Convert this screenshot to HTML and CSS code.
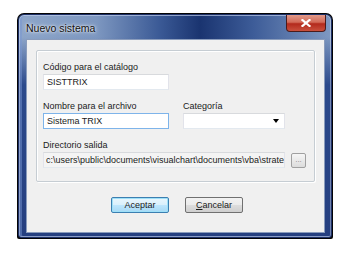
FILE: index.html
```html
<!DOCTYPE html>
<html lang="es">
<head>
  <meta charset="UTF-8" />
  <title>Nuevo sistema</title>
  <link rel="stylesheet" href="styles.css">
</head>
<body>

  <div class="window">
    <div class="glass">
      <div class="titlebar">
        <span class="title">Nuevo sistema</span>
        <span class="close">
          <svg width="10" height="8" viewBox="0 0 10 8">
            <path d="M1.5 1 L8.5 7 M8.5 1 L1.5 7" stroke="#fff" stroke-width="2.2" stroke-linecap="square"/>
          </svg>
        </span>
      </div>

      <div class="client">
        <div class="group">
          <div class="field">
            <label>Código para el catálogo</label>
            <div class="input short">SISTTRIX</div>
          </div>

          <div class="row">
            <div class="field">
              <label>Nombre para el archivo</label>
              <div class="input short focus">Sistema TRIX</div>
            </div>
            <div class="field">
              <label>Categoría</label>
              <div class="input combo">
                <span class="arrow"></span>
              </div>
            </div>
          </div>

          <div class="field">
            <label>Directorio salida</label>
            <div class="row tight">
              <div class="input path"><span class="path-text">c:\users\public\documents\visualchart\documents\vba\strate</span></div>
              <div class="browse">...</div>
            </div>
          </div>
        </div>

        <div class="buttons">
          <div class="btn default">Aceptar</div>
          <div class="btn"><u>C</u>ancelar</div>
        </div>
      </div>
    </div>
  </div>

</body>
</html>
```

FILE: styles.css
```css
body {
  margin: 0;
  padding: 13px 0 0 17px;
  background: #fff;
  font-family: "Liberation Sans", Arial, sans-serif;
  font-size: 9px;
  color: #1a1a1a;
}

.window {
  width: 316px;
  height: 226px;
  box-sizing: border-box;
  background: #050505;
  padding: 1px;
  border-radius: 7px 7px 2px 2px;
}

.glass {
  height: 100%;
  box-sizing: border-box;
  border-radius: 6px 6px 3px 3px;
  padding: 0 6px 5px 7px;
  border: 1px solid #1d2f66;
  background:
    linear-gradient(180deg, rgba(38, 66, 132, 0) 22px, #2c4a8c 70px, #253f80 100%),
    linear-gradient(90deg, #8ea6c9 0%, #7d97c0 25%, #3b5a96 45%, #1a3470 58%, #3d5c98 75%, #7f99c2 100%);
  box-shadow: inset 0 0 0 1px rgba(255, 255, 255, 0.35), inset 2px 0 0 1px rgba(120, 150, 210, 0.5);
}

.titlebar {
  height: 24px;
  display: flex;
  align-items: flex-start;
  justify-content: space-between;
}

.title {
  font-size: 10.5px;
  color: #111;
  margin-top: 7px;
  text-shadow: 0 0 4px rgba(255, 255, 255, 0.9), 0 0 2px rgba(255, 255, 255, 0.9);
}

.close {
  width: 40px;
  height: 17px;
  margin-right: -1px;
  box-sizing: border-box;
  border: 1px solid #4a1b1b;
  border-top: none;
  border-radius: 0 0 4px 4px;
  background: linear-gradient(180deg, #e29a8a 0%, #d26a58 45%, #b32a1c 55%, #c9503d 100%);
  display: flex;
  align-items: center;
  justify-content: center;
}

.client {
  height: 194px;
  box-sizing: border-box;
  background: #f0f0f0;
  border: 1px solid #8a9cbc;
  padding: 10px 10px 0 9px;
}

.group {
  width: 279px;
  height: 132px;
  box-sizing: border-box;
  border: 1px solid #c6cdd3;
  box-shadow: inset 1px 1px 0 #fff, 1px 1px 0 #fff;
  border-radius: 2px;
  padding: 10px 8px 0 6px;
  display: flex;
  flex-direction: column;
  gap: 10px;
}

.field {
  display: flex;
  flex-direction: column;
}

label {
  height: 12px;
  line-height: 12px;
  margin-bottom: 1px;
}

.row {
  display: flex;
  gap: 14px;
}

.row.tight {
  gap: 6px;
  align-items: center;
}

.input {
  height: 16px;
  box-sizing: border-box;
  background: #fff;
  border: 1px solid #abadb3;
  border-top-color: #d8dadd;
  border-left-color: #e2e3ea;
  border-right-color: #e2e3ea;
  border-bottom-color: #e3e9ef;
  padding: 0 3px;
  line-height: 14px;
  white-space: nowrap;
  overflow: hidden;
}

.input.short {
  width: 126px;
}

.input.focus {
  border-color: #7eb4ea;
}

.input.combo {
  width: 102px;
  position: relative;
}

.arrow {
  position: absolute;
  right: 5px;
  top: 5px;
  border-left: 3.5px solid transparent;
  border-right: 3.5px solid transparent;
  border-top: 4px solid #000;
}

.input.path {
  width: 242px;
  background: #f4f4f4;
  padding-left: 2px;
}

.path-text {
  display: block;
  width: 238px;
  overflow: hidden;
}

.browse {
  width: 15px;
  height: 15px;
  box-sizing: border-box;
  border: 1px solid #a0a0a0;
  border-radius: 2px;
  background: linear-gradient(180deg, #f6f6f6, #dcdcdc);
  color: #888;
  font-size: 8px;
  line-height: 11px;
  text-align: center;
}

.buttons {
  display: flex;
  gap: 16px;
  padding: 15px 0 0 75px;
}

.btn {
  width: 58px;
  height: 16px;
  box-sizing: border-box;
  border: 1px solid #707070;
  border-radius: 2px;
  background: linear-gradient(180deg, #f2f2f2 0%, #ebebeb 50%, #dddddd 51%, #cfcfcf 100%);
  text-align: center;
  line-height: 14px;
}

.btn.default {
  border-color: #3c7fb1;
  background: linear-gradient(180deg, #eaf6fd 0%, #d9f0fc 50%, #bee6fd 51%, #a7d9f5 100%);
  box-shadow: inset 0 0 0 1px #9ee0f8;
}
```
